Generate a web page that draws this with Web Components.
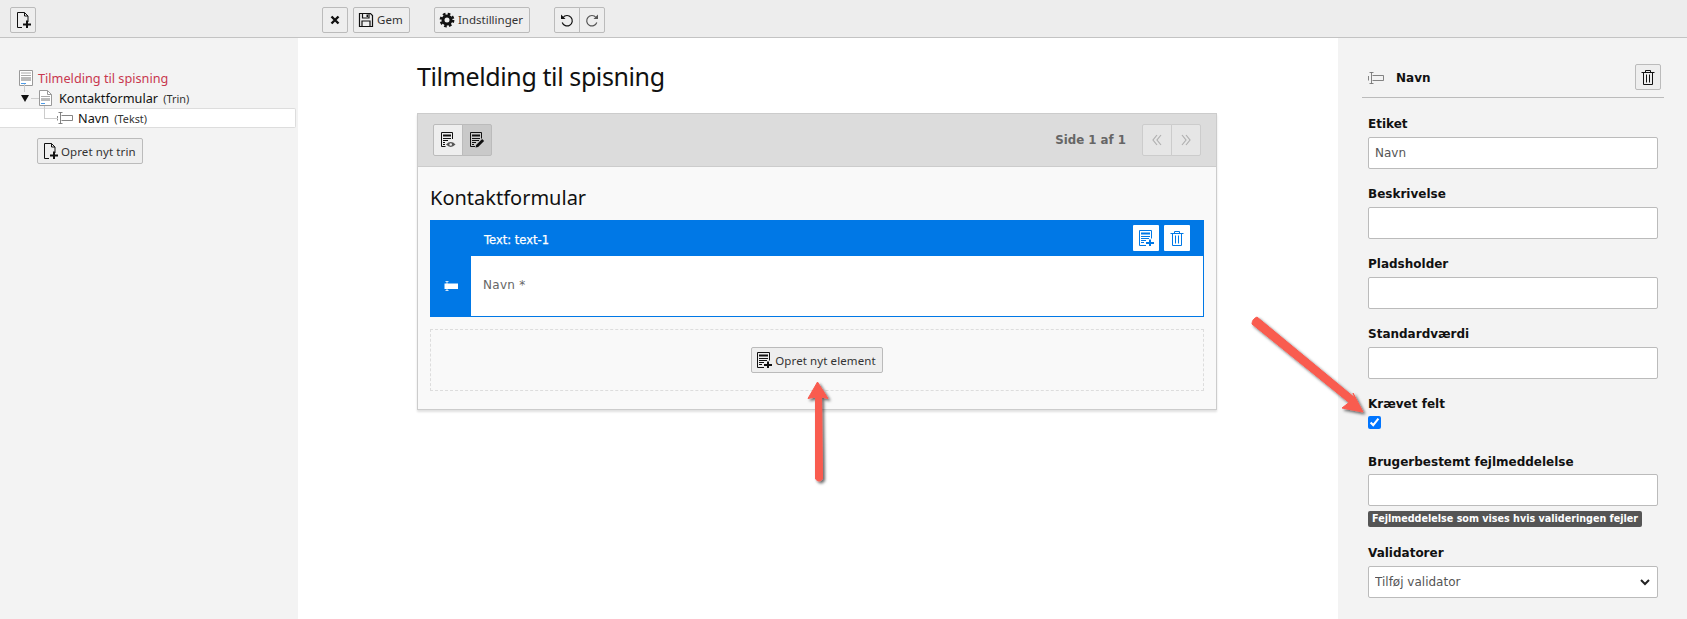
<!DOCTYPE html>
<html lang="da">
<head>
<meta charset="utf-8">
<title>Tilmelding til spisning</title>
<style>
	html, body { margin: 0; height: 100%; overflow: hidden; background: #fff; }
	body { font-family: "Noto Sans", "Liberation Sans", sans-serif; font-size: 12px; color: #333; }
</style>
</head>
<body>
<form-editor></form-editor>
<script>
(function () {
	//All icons are 16x16, they take their colour from currentColor.
	const icons = {
		docplus: `<path d="M2.5 .5h7l3.5 3.5v6M9.5 .5v3.5H13M7 15.5H2.5V.5" fill="none" stroke="currentColor"/><path d="M11 8.5h2v3h3v2h-3v2.5h-2V13.500H8v-2h3z" fill="currentColor"/>`,
		close: `<path d="M4.500 4.500l7 7M11.500 4.500l-7 7" stroke="currentColor" stroke-width="2.400" fill="none"/>`,
		save: `<path d="M1.500 1.500h11l2 2v11h-13zM4.500 1.500v4.500h6.500V1.500M4 14.500V9h8v5.500" fill="none" stroke="currentColor" stroke-width="1.200"/><path d="M8.500 2.500h1.500v2.500H8.500z" fill="currentColor"/>`,
		gear: `<circle cx="8" cy="8" r="4" fill="none" stroke="currentColor" stroke-width="3"/><circle cx="8" cy="8" r="6.200" fill="none" stroke="currentColor" stroke-width="2.400" stroke-dasharray="2.600 2.270"/>`,
		undo: `<path d="M4 5.500A5.200 5.200 0 1 1 3.200 10.500" fill="none" stroke="currentColor" stroke-width="1.200"/><path d="M2 2.500v4.500h4.500z" fill="currentColor"/>`,
		redo: `<path d="M12 5.500A5.200 5.200 0 1 0 12.800 10.500" fill="none" stroke="#555" stroke-width="1.200"/><path d="M14 2.500v4.500H9.500z" fill="#555"/>`,
		preview: `<path d="M5.500 14.500H1.500V.5h11v6.500" fill="none" stroke="currentColor"/><path d="M3 2.500h8v2H3zM3 6h8v1H3zM3 8h5v1H3zM3 10h2v1H3zM3 12h2v1H3z" fill="currentColor"/><path d="M6 12.500q4.750-4.800 9.500 0q-4.750 4.800-9.500 0z" fill="#555"/><circle cx="10.700" cy="12.500" r="1.300" fill="#eee"/>`,
		edit: `<path d="M6 14.500H1.500V.5h11v6" fill="none" stroke="currentColor"/><path d="M3 2.500h8v2H3zM3 6h8v1H3zM3 8h7v1H3zM3 10h4v1H3zM3 12h2v1H3z" fill="currentColor"/><path d="M6.500 15.500l.6-2.500 6-6 2 2-6 6z" fill="currentColor"/>`,
		listplus: `<path d="M8 15.500H1.500V.5h12v8" fill="none" stroke="currentColor"/><path d="M3 2.500h9v2H3zM3 6h9v1H3zM3 8h8v1H3zM3 10h5v1H3zM3 12h3v1H3z" fill="currentColor"/><path d="M11 9.500h2v2.500h3v2h-3v2h-2v-2H8v-2h3z" fill="currentColor"/>`,
		trash: `<path d="M3.500 3.500h9v12h-9zM1.500 3.500h13M5.500 3.500v-2h5v2M6.500 5.500v8M9.500 5.500v8" fill="none" stroke="currentColor"/>`,
		input: `<path d="M4.500 5.500h11v5h-11" fill="none" stroke="currentColor" opacity=".8"/><path d="M3.500 2.500v11M1.500 2.500h4M1.500 13.500h4M.5 6v4.500" fill="none" stroke="currentColor" opacity=".8"/>`,
		inputfill: `<path d="M4 3.500v9M2.500 3.500h3M2.500 12.500h3" fill="none" stroke="#cfe4f8"/><path d="M1.500 5.500h13.500v5.500H1.500z" fill="currentColor"/>`,
		form: `<path d="M1.500 .5h13v15h-13z" fill="#fff" stroke="#999"/><path d="M3 2.500h10v1H3zM3 5h10v1H3z" fill="#aaa"/><path d="M3 7h10v4H3z" fill="#bbb"/><path d="M3 13h5v1H3z" fill="#4c9be8"/>`,
		page: `<path d="M1.500 .5h8l4 4v11h-12z" fill="#fff" stroke="#999"/><path d="M9.500 .5v4h4" fill="none" stroke="#999"/><path d="M3 6h9v1H3z" fill="#aaa"/><path d="M3 8h9v3H3z" fill="#bbb"/><path d="M3 13h4v1H3z" fill="#4c9be8"/>`,
		first: `<path d="M8 3L4 8l4 5M12 3L8 8l4 5" fill="none" stroke="currentColor" stroke-width="1.200"/>`,
		last: `<path d="M4 3l4 5-4 5M8 3l4 5-4 5" fill="none" stroke="currentColor" stroke-width="1.200"/>`,
		chevron: `<path d="M4 6l4 4 4-4" fill="none" stroke="currentColor" stroke-width="2"/>`
	};

	//<form-icon name="trash" size="16">
	class FormIcon extends HTMLElement {
		connectedCallback() {
			if (this.shadowRoot) return;
			const size = this.getAttribute("size") || 16;
			this.attachShadow({ mode: "open" }).innerHTML = `
				<style>
					:host { display: inline-flex; flex: none; }
					svg { display: block; }
				</style>
				<svg width="${size}" height="${size}" viewBox="0 0 16 16">${icons[this.getAttribute("name")]}</svg>
			`;
		}
	}
	customElements.define("form-icon", FormIcon);

	//Grey toolbar button, the icon goes in through the attribute and the label through the slot.
	class FormButton extends HTMLElement {
		connectedCallback() {
			if (this.shadowRoot) return;
			const name = this.getAttribute("icon");
			const hasLabel = this.textContent.trim() !== "";
			this.attachShadow({ mode: "open" }).innerHTML = `
				<style>
					:host {
						display: inline-flex;
						align-items: center;
						justify-content: center;
						box-sizing: border-box;
						height: 26px;
						min-width: 26px;
						padding: 0 4px;
						gap: 3px;
						background: #eee;
						border: 1px solid #bbb;
						border-radius: 2px;
						font: 11.500px "Noto Sans", sans-serif;
						letter-spacing: .1px;
						color: #333;
						white-space: nowrap;
					}
					:host([joined="left"]) { border-radius: 2px 0 0 2px; }
					:host([joined="right"]) { border-radius: 0 2px 2px 0; margin-left: -1px; }
					form-icon { color: var(--icon-color, #111); }
					span { margin-right: 2px; }
				</style>
				${name ? `<form-icon name="${name}"></form-icon>` : ""}${hasLabel ? "<span><slot></slot></span>" : ""}
			`;
		}
	}
	customElements.define("form-button", FormButton);

	const toolbarTemplate = document.createElement("template");
	toolbarTemplate.innerHTML = `
		<style>
			:host {
				display: flex;
				align-items: center;
				box-sizing: border-box;
				height: 38px;
				padding: 2px 0 0 10px;
				background: #ededed;
				border-bottom: 1px solid #c3c3c3;
			}
			.new { margin-right: 286px; }
			.gap { margin-left: 5px; }
			.group { margin-left: 24px; }
			.settings { letter-spacing: 0; }
		</style>
		<form-button class="new" icon="docplus"></form-button>
		<form-button icon="close"></form-button>
		<form-button class="gap" icon="save">Gem</form-button>
		<form-button class="group settings" icon="gear">Indstillinger</form-button>
		<form-button class="group" icon="undo" joined="left"></form-button>
		<form-button icon="redo" joined="right"></form-button>
	`;
	class FormToolbar extends HTMLElement {
		constructor() {
			super();
			this.attachShadow({ mode: "open" }).appendChild(toolbarTemplate.content.cloneNode(true));
		}
	}
	customElements.define("form-toolbar", FormToolbar);

	const treeTemplate = document.createElement("template");
	treeTemplate.innerHTML = `
		<style>
			:host {
				display: block;
				padding-top: 30px;
				background: #f3f3f3;
				font: 12.700px "Noto Sans", sans-serif;
				color: #111;
				overflow: hidden;
			}
			.row {
				position: relative;
				display: flex;
				align-items: center;
				height: 20px;
				gap: 4px;
			}
			small { font-size: 10.800px; color: #333; margin-left: 2px; }
			.root { padding-left: 18px; color: #c8384f; }
			.step { padding-left: 38px; gap: 5px; }
			.item {
				box-sizing: border-box;
				width: 296px;
				padding-left: 57px;
				gap: 5px;
				background: #fff;
				border: 1px solid #ddd;
				border-left: 0;
				border-radius: 0 2px 2px 0;
			}
			.arrow {
				position: absolute;
				left: 21px;
				top: 7px;
				border: 4.500px solid transparent;
				border-top: 7px solid #111;
				border-bottom: 0;
			}
			.line { position: absolute; background: #ccc; }
			.add { margin: 10px 0 0 37px; }
		</style>
		<div class="row root"><form-icon name="form"></form-icon>Tilmelding til spisning</div>
		<div class="row step">
			<i class="line" style="left:24px;top:-4px;width:1px;height:8px"></i>
			<i class="line" style="left:31px;top:10px;width:8px;height:1px"></i>
			<i class="arrow"></i>
			<form-icon name="page"></form-icon>
			<span>Kontaktformular <small>(Trin)</small></span>
		</div>
		<div class="row item">
			<i class="line" style="left:44px;top:-3px;width:1px;height:12px"></i>
			<i class="line" style="left:44px;top:9px;width:14px;height:1px"></i>
			<form-icon name="input" style="color:#666"></form-icon>
			<span>Navn <small>(Tekst)</small></span>
		</div>
		<form-button class="add" icon="docplus">Opret nyt trin</form-button>
	`;
	class FormTree extends HTMLElement {
		constructor() {
			super();
			this.attachShadow({ mode: "open" }).appendChild(treeTemplate.content.cloneNode(true));
		}
	}
	customElements.define("form-tree", FormTree);

	const stageTemplate = document.createElement("template");
	stageTemplate.innerHTML = `
		<style>
			:host {
				display: block;
				padding-left: 119px;
				background: #fff;
				overflow: hidden;
			}
			h1 {
				margin: 0;
				height: 75px;
				font: 400 25px/76px "Noto Sans", sans-serif;
				letter-spacing: -.4px;
				color: #111;
			}
			.card {
				box-sizing: border-box;
				width: 800px;
				height: 297px;
				background: #f9f9f9;
				border: 1px solid #ccc;
				box-shadow: 0 2px 2px rgba(0,0,0,.12);
			}
			.head {
				display: flex;
				align-items: center;
				box-sizing: border-box;
				height: 53px;
				padding: 0 15px;
				background: #dcdcdc;
				border-bottom: 1px solid #ccc;
			}
			.head form-button { height: 32px; width: 30px; padding: 0; }
			.pressed { background: #c9c9c9; }
			.plain { background: #eee; }
			.pages {
				margin: 0 16px 0 auto;
				font: 700 11.800px "DejaVu Sans", sans-serif;
				color: #666;
			}
			.head .muted { background: #e6e6e6; border-color: #ccc; --icon-color: #b0b0b0; }
			h2 {
				margin: 0;
				height: 53px;
				padding-left: 12px;
				font: 400 20px/61px "Noto Sans", sans-serif;
				color: #111;
			}
			.element {
				display: grid;
				grid-template-columns: 41px 1fr;
				grid-template-rows: 35px 1fr;
				margin: 0 12px;
				height: 97px;
				box-sizing: border-box;
				background: #0078e6;
				border: 1px solid #0078e6;
				border-left: 0;
				color: #fff;
			}
			.title {
				grid-column: 1 / 3;
				display: flex;
				align-items: center;
				padding: 3px 0 0 54px;
				font: 400 11.500px "DejaVu Sans", sans-serif;
				-webkit-text-stroke: .25px #fff;
			}
			.actions { margin: -4px 13px 0 auto; display: flex; gap: 5px; }
			.actions span {
				display: flex;
				align-items: center;
				justify-content: center;
				width: 26px;
				height: 26px;
				background: #fff;
				color: #0078e6;
				border-radius: 1px;
			}
			.grip { display: flex; align-items: center; justify-content: center; color: #fff; }
			.body {
				display: flex;
				align-items: center;
				padding: 0 0 2px 12px;
				background: #fff;
				color: #666;
				font: 12px "DejaVu Sans", sans-serif;
				letter-spacing: .3px;
			}
			.drop {
				display: flex;
				align-items: center;
				justify-content: center;
				box-sizing: border-box;
				height: 62px;
				margin: 12px 12px 0;
				border: 1px dashed #ddd;
			}
		</style>
		<h1>Tilmelding til spisning</h1>
		<div class="card">
			<div class="head">
				<form-button class="plain" icon="preview" joined="left"></form-button>
				<form-button class="pressed" icon="edit" joined="right"></form-button>
				<span class="pages">Side 1 af 1</span>
				<form-button class="muted" icon="first" joined="left"></form-button>
				<form-button class="muted" icon="last" joined="right"></form-button>
			</div>
			<h2>Kontaktformular</h2>
			<div class="element">
				<div class="title">Text: text-1
					<div class="actions">
						<span><form-icon name="listplus"></form-icon></span>
						<span><form-icon name="trash"></form-icon></span>
					</div>
				</div>
				<div class="grip"><form-icon name="inputfill"></form-icon></div>
				<div class="body">Navn *</div>
			</div>
			<div class="drop"><form-button icon="listplus">Opret nyt element</form-button></div>
		</div>
	`;
	class FormStage extends HTMLElement {
		constructor() {
			super();
			this.attachShadow({ mode: "open" }).appendChild(stageTemplate.content.cloneNode(true));
		}
	}
	customElements.define("form-stage", FormStage);

	//Label with a control below it, the control comes in through the slot.
	const fieldTemplate = document.createElement("template");
	fieldTemplate.innerHTML = `
		<style>
			:host { display: block; margin-bottom: 17px; }
			label {
				display: block;
				height: 16px;
				margin-bottom: 5px;
				font: 700 12px/16px "DejaVu Sans", sans-serif;
				color: #111;
			}
			:host([tight]) label { margin-bottom: 4px; }
		</style>
		<label><slot name="label"></slot></label>
		<slot></slot>
	`;
	class FormField extends HTMLElement {
		constructor() {
			super();
			this.attachShadow({ mode: "open" }).appendChild(fieldTemplate.content.cloneNode(true));
		}
	}
	customElements.define("form-field", FormField);

	const panelTemplate = document.createElement("template");
	panelTemplate.innerHTML = `
		<style>
			:host {
				display: block;
				box-sizing: border-box;
				padding: 25px 23px 0 24px;
				background: #f3f3f3;
				overflow: hidden;
			}
			header {
				display: flex;
				align-items: center;
				height: 34px;
				padding-left: 6px;
				margin-bottom: 18px;
				border-bottom: 1px solid #bbb;
				font: 700 12px "DejaVu Sans", sans-serif;
				color: #111;
			}
			header form-icon { margin-right: 12px; color: #666; position: relative; top: -2px; }
			header span { position: relative; top: -2px; }
			header form-button { margin: -6px 3px 0 auto; }
			.fields { padding: 0 6px; }
			input[type=text], select {
				display: block;
				box-sizing: border-box;
				width: 100%;
				height: 32px;
				margin: 0;
				padding: 0 6px;
				background: #fff;
				border: 1px solid #bbb;
				border-radius: 2px;
				font: 12px "DejaVu Sans", sans-serif;
				color: #555;
				outline: 0;
			}
			select { appearance: none; }
			.select { position: relative; }
			.select form-icon { position: absolute; right: 5px; top: 8px; color: #222; }
			input[type=checkbox] { display: block; width: 13px; height: 13px; margin: 0 0 25px; accent-color: #0075ff; }
			.hint {
				display: inline-block;
				margin-top: 5px;
				padding: 0 4px;
				height: 16px;
				background: #555;
				border-radius: 2px;
				color: #fff;
				font: 700 9.600px/16px "DejaVu Sans", sans-serif;
				white-space: nowrap;
			}
		</style>
		<header>
			<form-icon name="input"></form-icon>
			<span>Navn</span>
			<form-button icon="trash"></form-button>
		</header>
		<div class="fields">
			<form-field><span slot="label">Etiket</span><input type="text" value="Navn" aria-label="Etiket"></form-field>
			<form-field><span slot="label">Beskrivelse</span><input type="text" aria-label="Beskrivelse"></form-field>
			<form-field><span slot="label">Pladsholder</span><input type="text" aria-label="Pladsholder"></form-field>
			<form-field><span slot="label">Standardværdi</span><input type="text" aria-label="Standardværdi"></form-field>
			<form-field tight style="margin-bottom:0"><span slot="label">Krævet felt</span><input type="checkbox" checked aria-label="Krævet felt"></form-field>
			<form-field tight style="margin-bottom:18px"><span slot="label">Brugerbestemt fejlmeddelelse</span><input type="text" aria-label="Brugerbestemt fejlmeddelelse"><span class="hint">Fejlmeddelelse som vises hvis valideringen fejler</span></form-field>
			<form-field><span slot="label">Validatorer</span><div class="select"><select aria-label="Validatorer"><option>Tilføj validator</option></select><form-icon name="chevron"></form-icon></div></form-field>
		</div>
	`;
	class FormPanel extends HTMLElement {
		constructor() {
			super();
			this.attachShadow({ mode: "open" }).appendChild(panelTemplate.content.cloneNode(true));
		}
	}
	customElements.define("form-panel", FormPanel);

	//The two red arrows painted on the screenshot, they lie over everything else.
	const appTemplate = document.createElement("template");
	appTemplate.innerHTML = `
		<style>
			:host {
				display: grid;
				grid-template-columns: 298px 1fr 349px;
				grid-template-rows: 38px 1fr;
				height: 100vh;
				overflow: hidden;
				position: relative;
			}
			form-toolbar { grid-column: 1 / 4; }
			svg { position: absolute; left: 0; top: 0; pointer-events: none; }
		</style>
		<form-toolbar></form-toolbar>
		<form-tree></form-tree>
		<form-stage></form-stage>
		<form-panel></form-panel>
		<svg width="1687" height="619" viewBox="0 0 1687 619">
			<defs>
				<filter id="shade" x="-30%" y="-30%" width="160%" height="160%">
					<feDropShadow dx="2" dy="2" stdDeviation="1.800" flood-color="#000" flood-opacity=".6"/>
				</filter>
			</defs>
			<g fill="#f95b50" stroke="#f95b50" stroke-linejoin="round" filter="url(#shade)">
				<path d="M817.500 382L828 398.500L821.500 397L822.500 479Q819 483 815.500 479L815.500 397L808 398.500z"/>
				<path d="M1363 412L1342 408L1349 402.500L1252 324Q1252 319 1257 317L1355 398L1353 393z"/>
			</g>
		</svg>
	`;
	class FormEditor extends HTMLElement {
		constructor() {
			super();
			this.attachShadow({ mode: "open" }).appendChild(appTemplate.content.cloneNode(true));
		}
	}
	customElements.define("form-editor", FormEditor);
})();
</script>
</body>
</html>
